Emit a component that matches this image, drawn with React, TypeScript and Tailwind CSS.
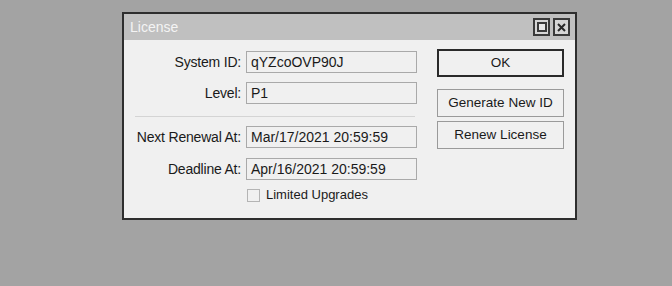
import React from 'react';

const Field = ({ value }: { value: string }) => (
  <div className="h-[22px] w-[171px] whitespace-nowrap border border-[#a9a9a9] bg-[#f0f0f0] pl-[4px] text-[14px] leading-[20px] text-[#1a1a1a]">
    {value}
  </div>
);

const Label = ({ text }: { text: string }) => (
  <div className="h-[22px] whitespace-nowrap text-right text-[14px] leading-[22px] tracking-[-0.2px] text-[#1a1a1a]">
    {text}
  </div>
);

const Btn = ({ text, primary }: { text: string; primary?: boolean }) => (
  <button
    className={`h-[28px] w-[127px] bg-[#f0f0f0] text-[13.5px] text-[#1a1a1a] ${
      primary ? 'border-2 border-[#2a2a2a]' : 'border border-[#9a9a9a]'
    }`}
  >
    {text}
  </button>
);

export default function App() {
  return (
    <div
      className="h-[286px] w-[672px] bg-[#a3a3a3] pl-[122px] pt-[12px]"
      style={{ fontFamily: '"Liberation Sans", Arial, sans-serif' }}
    >
      <div className="flex h-[208px] w-[455px] flex-col border-2 border-[#2e2e2e] bg-[#f0f0f0]">
        <div className="flex h-[26px] items-center justify-between bg-[#c0c0c0] pl-[6px] pr-[5px]">
          <span className="text-[14px] text-[#f4f4f4]">License</span>
          <div className="flex gap-[3px]">
            <div className="flex h-[18px] w-[17px] items-center justify-center border-2 border-[#3a3a3a] bg-[#d6d6d6]">
              <div className="h-[10px] w-[10px] border-2 border-[#3a3a3a] bg-[#e8e8e8]" />
            </div>
            <div className="flex h-[18px] w-[17px] items-center justify-center border-2 border-[#3a3a3a] bg-[#d6d6d6]">
              <svg width="9" height="9" viewBox="0 0 9 9">
                <path d="M1 1 L8 8 M8 1 L1 8" stroke="#2a2a2a" strokeWidth="2" />
              </svg>
            </div>
          </div>
        </div>

        <div className="flex pl-[11px] pt-[11px]">
          <div className="flex flex-col">
            <div className="grid grid-cols-[106px_171px] gap-x-[5px] gap-y-[9px]">
              <Label text="System ID:" />
              <Field value="qYZcoOVP90J" />
              <Label text="Level:" />
              <Field value="P1" />
            </div>
            <div className="mb-[9px] mt-[12px] h-px w-[280px] bg-[#d4d4d4]" />
            <div className="grid grid-cols-[106px_171px] gap-x-[5px] gap-y-[10px]">
              <Label text="Next Renewal At:" />
              <Field value="Mar/17/2021 20:59:59" />
              <Label text="Deadline At:" />
              <Field value="Apr/16/2021 20:59:59" />
            </div>
            <div className="ml-[112px] mt-[7px] flex items-center gap-[6px]">
              <div className="h-[13px] w-[13px] border border-[#b4b4b4] bg-[#f0f0f0]" />
              <span className="text-[13px] leading-[16px] text-[#1a1a1a]">Limited Upgrades</span>
            </div>
          </div>

          <div className="ml-[20px] flex flex-col gap-[4px]">
            <div className="-mt-[2px] mb-[8px] flex">
              <Btn text="OK" primary />
            </div>
            <Btn text="Generate New ID" />
            <Btn text="Renew License" />
          </div>
        </div>
      </div>
    </div>
  );
}
